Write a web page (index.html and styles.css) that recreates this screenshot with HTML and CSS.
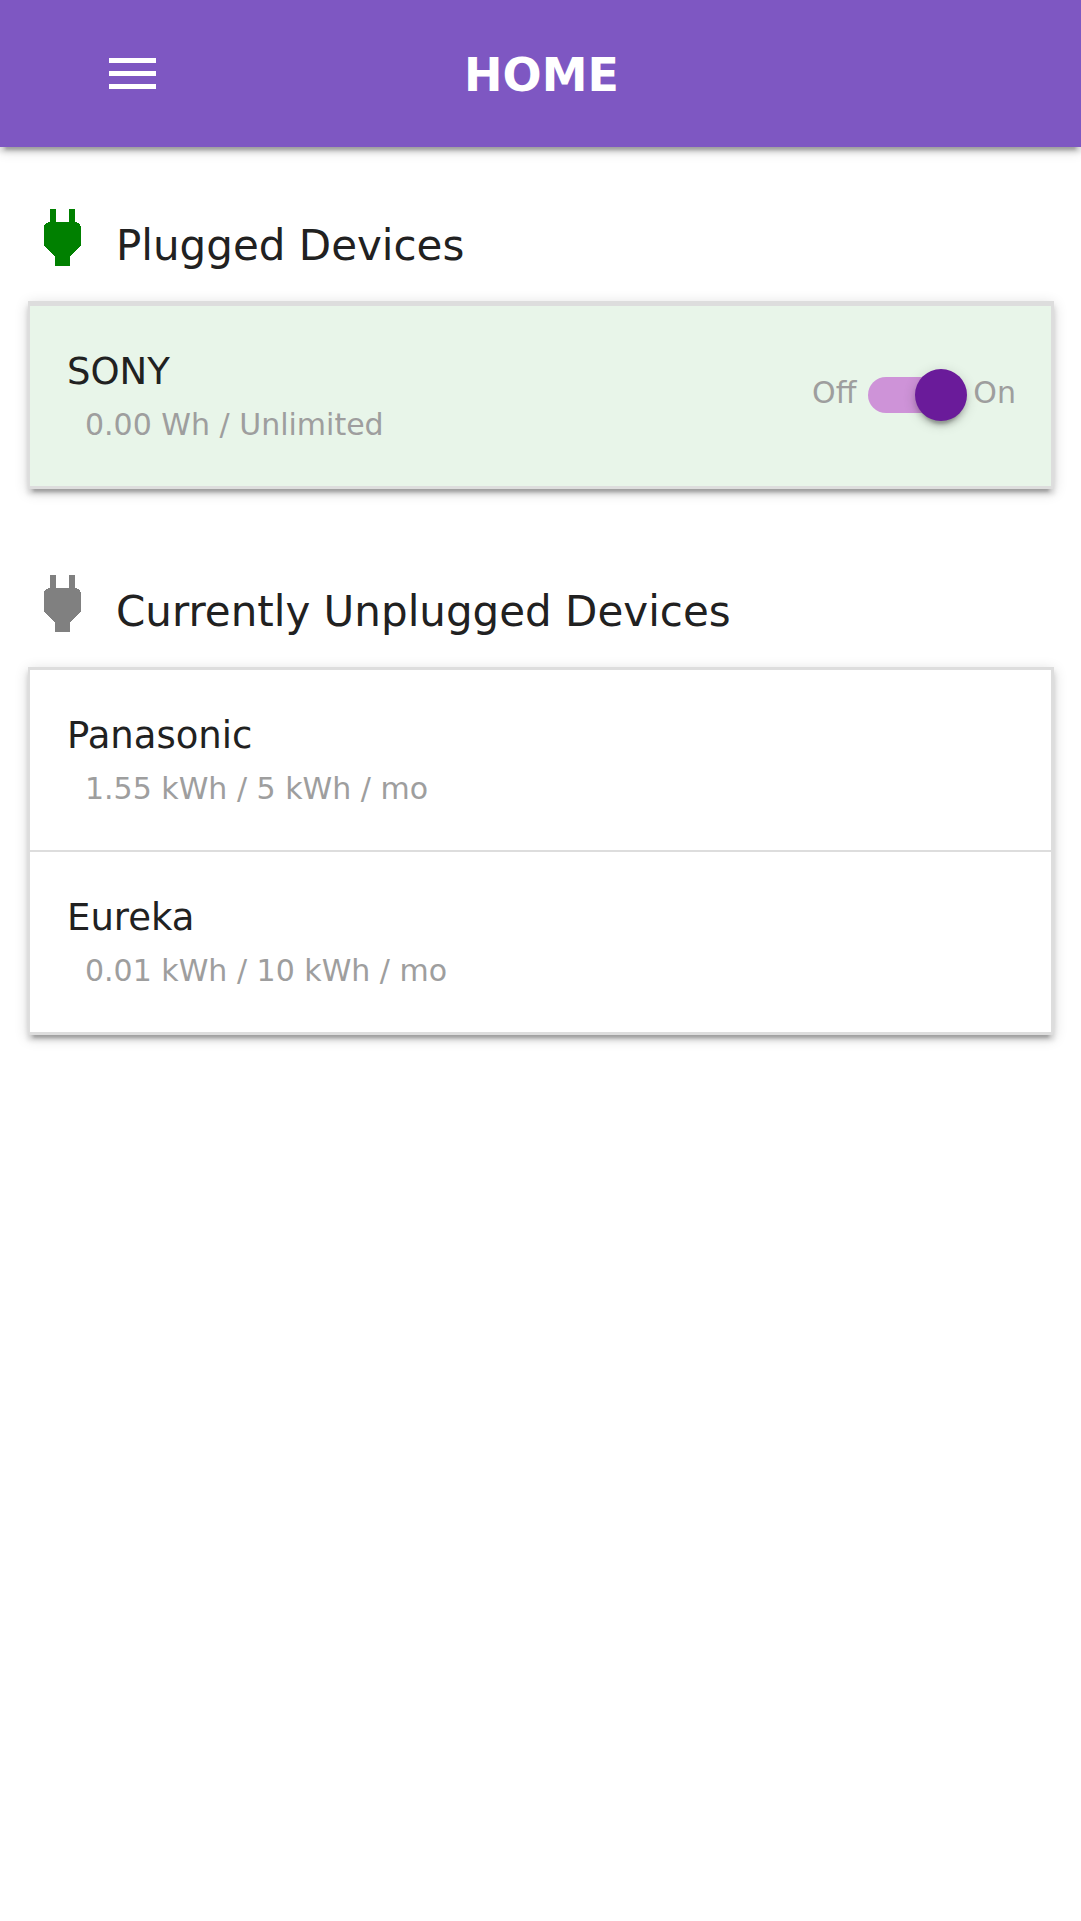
FILE: index.html
```
<!DOCTYPE html>
<html lang="en">
<head>
<meta charset="utf-8">
<meta name="viewport" content="width=device-width, initial-scale=1">
<title>Home</title>
<link rel="stylesheet" href="styles.css">
</head>
<body>
<header class="navbar">
  <button class="menu-button" type="button" aria-label="Menu">
    <svg class="menu-icon" viewBox="0 0 47 31" aria-hidden="true"><path d="M0 0h47v5H0zM0 13h47v5H0zM0 26h47v5H0z"/></svg>
  </button>
  <h1 class="navbar-title">HOME</h1>
</header>
<main class="content">
  <section class="group">
    <div class="group-header">
      <svg class="plug plug-on" viewBox="0 0 24 24" aria-hidden="true"><path d="M16.01 7L16 3h-2v4h-4V3H8v4h-.01C7 6.99 6 7.99 6 8.99v5.49L9.5 18v3h5v-3l3.5-3.51v-5.5c0-1-1-2-1.99-1.99z"/></svg>
      <h2 class="group-title">Plugged Devices</h2>
    </div>
    <ul class="collection collection-active">
      <li class="device">
        <div class="device-info">
          <h3 class="device-name">SONY</h3>
          <p class="device-usage">0.00 Wh / Unlimited</p>
        </div>
        <label class="switch">
          <span class="switch-label">Off</span>
          <input class="switch-input" type="checkbox" checked>
          <span class="switch-label">On</span>
        </label>
      </li>
    </ul>
  </section>
  <section class="group">
    <div class="group-header">
      <svg class="plug plug-off" viewBox="0 0 24 24" aria-hidden="true"><path d="M16.01 7L16 3h-2v4h-4V3H8v4h-.01C7 6.99 6 7.99 6 8.99v5.49L9.5 18v3h5v-3l3.5-3.51v-5.5c0-1-1-2-1.99-1.99z"/></svg>
      <h2 class="group-title">Currently Unplugged Devices</h2>
    </div>
    <ul class="collection">
      <li class="device">
        <div class="device-info">
          <h3 class="device-name">Panasonic</h3>
          <p class="device-usage">1.55 kWh / 5 kWh / mo</p>
        </div>
      </li>
      <li class="device">
        <div class="device-info">
          <h3 class="device-name">Eureka</h3>
          <p class="device-usage">0.01 kWh / 10 kWh / mo</p>
        </div>
      </li>
    </ul>
  </section>
</main>
</body>
</html>
```
FILE: styles.css
```
* {
  box-sizing: border-box;
}

body {
  margin: 0;
  background: #fff;
  color: #212121;
  font-family: "DejaVu Sans", Verdana, sans-serif;
}

h1, h2, h3, p, ul {
  margin: 0;
  padding: 0;
  font-weight: 400;
}

.navbar,
.collection {
  box-shadow: 0 5px 5px 0 rgba(0, 0, 0, 0.14),
    0 8px 3px -5px rgba(0, 0, 0, 0.2),
    0 3px 13px 0 rgba(0, 0, 0, 0.16);
}

.navbar {
  display: grid;
  grid-template-columns: 1fr auto 1fr;
  align-items: center;
  min-height: 147px;
  background: #7e57c2;
  color: #fff;
}

.menu-button {
  justify-self: start;
  display: flex;
  margin-left: 93px;
  padding: 16px;
  border: 0;
  background: none;
  color: inherit;
  cursor: pointer;
}

.menu-icon {
  width: 47px;
  height: 31px;
  fill: currentColor;
}

.navbar-title {
  padding: 2px 0 0 2px;
  font-size: 46px;
  line-height: 64px;
  font-weight: 700;
}

.content {
  display: flex;
  flex-direction: column;
  gap: 77px;
  padding: 53px 27px 77px 28px;
}

.group-header {
  display: flex;
  align-items: flex-start;
  gap: 16px;
  margin: 0 0 9px -3px;
}

.plug {
  flex: none;
  width: 75px;
  height: 75px;
  shape-rendering: crispEdges;
}

.plug-on {
  fill: #008000;
}

.plug-off {
  fill: #808080;
}

.group-title {
  font-size: 42px;
  line-height: 92px;
}

.collection {
  list-style: none;
  border: 3px solid #ddd;
  border-left-width: 2px;
  background: #fff;
}

.collection-active {
  border-top-width: 5px;
  background: #e8f5e9;
}

.device {
  display: flex;
  justify-content: space-between;
  align-items: center;
  padding: 0 35px 0 37px;
  min-height: 180px;
}

.device + .device {
  border-top: 2px solid #ddd;
  min-height: 182px;
}

.device-info {
  padding: 40px 0 34px;
}

.device-name {
  font-size: 37px;
  line-height: 52px;
}

.device-usage {
  padding-left: 18px;
  color: #9e9e9e;
  font-size: 30px;
  line-height: 54px;
}

.switch {
  display: flex;
  align-items: flex-start;
  margin-bottom: 2px;
  color: #9e9e9e;
  font-size: 30px;
  line-height: 48px;
  cursor: pointer;
}

.switch-input {
  appearance: none;
  display: flex;
  align-items: center;
  width: 98px;
  height: 36px;
  margin: 8px 7px 8px 12px;
  border-radius: 18px;
  background: #ce93d8;
  cursor: pointer;
}

.switch-input::before {
  content: "";
  flex: none;
  width: 52px;
  height: 52px;
  border-radius: 50%;
  background: #9e9e9e;
  box-shadow: 0 5px 5px 0 rgba(0, 0, 0, 0.14),
    0 8px 3px -5px rgba(0, 0, 0, 0.2),
    0 3px 13px 0 rgba(0, 0, 0, 0.16);
}

.switch-input:checked::before {
  margin-left: 47px;
  background: #6a1b9a;
}

.switch-input:not(:checked) {
  background: #bdbdbd;
}
```
